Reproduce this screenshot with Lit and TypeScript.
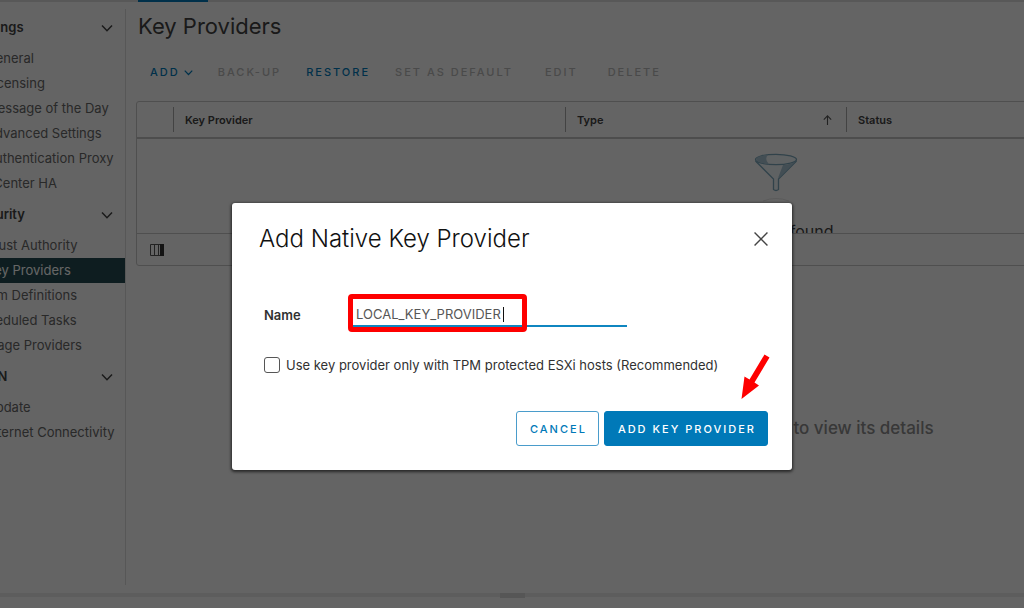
import { LitElement, html, css, svg } from "lit";
import { customElement, property, state } from "lit/decorators.js";
import { classMap } from "lit/directives/class-map.js";

interface NavGroup {
  title: string;
  items: string[];
  roots?: string[];
}

const NAV: NavGroup[] = [
  {
    title: "Settings",
    items: [
      "General",
      "Licensing",
      "Message of the Day",
      "Advanced Settings",
      "Authentication Proxy",
      "vCenter HA",
    ],
  },
  {
    title: "Security",
    items: ["Trust Authority", "Key Providers"],
    roots: ["Alarm Definitions", "Scheduled Tasks", "Storage Providers"],
  },
  { title: "vSAN", items: ["Update", "Internet Connectivity"] },
];

const chevron = (size: number, width: number) => html`<svg
  width=${size}
  height=${size}
  viewBox="0 0 12 12"
  fill="none"
  stroke="currentColor"
  stroke-width=${width}
  aria-hidden="true"
>
  ${svg`<path d="M1 3.5 L6 8.7 L11 3.5" />`}
</svg>`;

@customElement("side-nav")
export class SideNav extends LitElement {
  @property() selected = "";

  static styles = css`
    :host {
      display: block;
      flex: none;
      width: 125px;
      overflow: hidden;
      border-right: 1px solid #dadada;
      color: #666;
      font-size: 13px;
      line-height: 25px;
      white-space: nowrap;
    }
    .track {
      margin-left: -50px;
    }
    .head {
      display: flex;
      align-items: center;
      justify-content: space-between;
      box-sizing: border-box;
      width: 100%;
      height: 37px;
      padding: 0 12px 0 22px;
      border: 0;
      background: none;
      color: #424242;
      font: inherit;
      font-weight: 600;
    }
    .link {
      display: block;
      padding-left: 36px;
      color: inherit;
      text-decoration: none;
    }
    .root {
      padding-left: 22px;
    }
    .active {
      background: #234a50;
      color: #fff;
    }
  `;

  private link(text: string, root: boolean) {
    const active = text === this.selected;
    return html`<a class=${classMap({ link: true, root, active })} href="#">${text}</a>`;
  }

  render() {
    return html`<nav class="track">
      ${NAV.map(
        (g) => html`
          <button class="head" aria-expanded="true">${g.title}${chevron(12, 1.5)}</button>
          ${g.items.map((i) => this.link(i, false))}
          ${(g.roots ?? []).map((i) => this.link(i, true))}
        `
      )}
    </nav>`;
  }
}

@customElement("key-grid")
export class KeyGrid extends LitElement {
  static styles = css`
    :host {
      display: block;
      border: 1px solid #c6c6c6;
      border-radius: 3px;
      color: #424242;
    }
    .table {
      width: 100%;
      table-layout: fixed;
      border-collapse: collapse;
    }
    .pick {
      width: 36px;
    }
    .key {
      width: 392px;
    }
    .type {
      width: 281px;
    }
    .th {
      height: 35px;
      padding: 0;
      border-bottom: 2px solid #c0c0c0;
      text-align: left;
      font-size: 11px;
      font-weight: 600;
    }
    .cell {
      display: flex;
      align-items: center;
      justify-content: space-between;
      height: 25px;
      padding: 0 14px 0 11px;
      border-left: 1px solid #a8a8a8;
    }
    .td {
      padding: 0;
    }
    .empty {
      display: flex;
      flex-direction: column;
      align-items: center;
      box-sizing: border-box;
      height: 94px;
      padding-top: 14px;
      overflow: hidden;
      font-size: 16px;
      line-height: 24px;
    }
    .funnel {
      flex: none;
      margin-bottom: 16px;
    }
    .foot {
      display: flex;
      align-items: center;
      height: 31px;
      padding-left: 13px;
      border-top: 1px solid #c6c6c6;
    }
    .columns {
      display: flex;
      padding: 0;
      border: 0;
      background: none;
      color: #565656;
    }
  `;

  render() {
    return html`
      <table class="table">
        <thead>
          <tr>
            <th class="th pick" aria-label="Select"></th>
            <th class="th key"><div class="cell">Key Provider</div></th>
            <th class="th type">
              <div class="cell">
                Type
                <svg width="9" height="10" viewBox="0 0 9 10" fill="none" stroke="#565656" stroke-width="1.1">
                  <path d="M4.5 10 V1 M0.8 4.6 L4.5 0.9 L8.2 4.6" />
                </svg>
              </div>
            </th>
            <th class="th"><div class="cell">Status</div></th>
          </tr>
        </thead>
        <tbody>
          <tr>
            <td class="td" colspan="4">
              <div class="empty">
                <svg class="funnel" width="44" height="50" viewBox="0 0 44 50" fill="none" stroke="#7ba6ba" stroke-width="1.3">
                  <path d="M1.5 8 L19.5 26 V36.5 Q22 38.5 24.5 36.5 V26 L42.5 8" fill="#eef4f7" />
                  <ellipse cx="22" cy="6.5" rx="20.5" ry="5.2" fill="#eef4f7" />
                  <path d="M29 12 Q38 11 42 8 L26 24 L24 25 Z" fill="#a9c4d2" stroke="none" />
                  <path d="M2 6 Q4 2.6 14 1.8 Q10 6 15 11.4 Q3 10 2 6 Z" fill="#a9c4d2" stroke="none" />
                  <path d="M9 48 Q22 43 35 48" stroke="#e2e2e2" stroke-width="1" />
                </svg>
                <span>No items found</span>
              </div>
            </td>
          </tr>
        </tbody>
      </table>
      <div class="foot">
        <button class="columns" aria-label="Manage columns">
          <svg width="14" height="12" viewBox="0 0 14 12" fill="none" stroke="currentColor">
            <path d="M0.5 0.5 H13.5 V11.5 H0.5 Z M4.5 0.5 V11.5 M8.5 0.5 V11.5" />
            <path d="M10 0 H14 V12 H10 Z" fill="#313131" stroke="none" />
          </svg>
        </button>
      </div>
    `;
  }
}

@customElement("add-provider-dialog")
export class AddProviderDialog extends LitElement {
  @state() private name = "LOCAL_KEY_PROVIDER";

  static styles = css`
    :host {
      display: block;
      box-sizing: border-box;
      width: 560px;
      max-width: 100%;
      padding: 22px 24px 24px 27px;
      border-radius: 3px;
      background: #fff;
      box-shadow: 0 1px 3px 1px rgba(0, 0, 0, 0.6);
      color: #313131;
      font-size: 13px;
    }
    .top {
      display: flex;
      align-items: center;
      justify-content: space-between;
      height: 28px;
    }
    .title {
      margin: 0;
      color: #111;
      font-size: 24px;
      font-weight: 300;
      line-height: 28px;
    }
    .close {
      display: flex;
      padding: 0;
      border: 0;
      background: none;
      color: #444;
    }
    .row {
      display: flex;
      align-items: center;
      margin-top: 49px;
      padding-left: 5px;
    }
    .label {
      width: 88px;
      font-weight: 600;
    }
    .field {
      position: relative;
      width: 275px;
    }
    .input {
      box-sizing: border-box;
      width: 100%;
      height: 25px;
      padding: 1px 4px 0;
      border: 0;
      border-bottom: 2px solid #0f86c0;
      outline: 0;
      background: none;
      color: #565656;
      font: inherit;
    }
    .caret {
      position: absolute;
      top: 5px;
      left: 151px;
      width: 1px;
      height: 15px;
      background: #111;
    }
    .mark {
      position: absolute;
      top: -8px;
      left: -4px;
      box-sizing: border-box;
      width: 179px;
      height: 38px;
      border: 5px solid #fe0000;
      border-radius: 4px;
      pointer-events: none;
    }
    .check {
      display: flex;
      align-items: center;
      gap: 6px;
      margin-top: 28px;
      padding-left: 5px;
      line-height: 20px;
    }
    .box {
      appearance: none;
      box-sizing: border-box;
      width: 16px;
      height: 16px;
      margin: 0;
      border: 1px solid #565656;
      border-radius: 3px;
      background: #fff;
    }
    .actions {
      position: relative;
      display: flex;
      justify-content: flex-end;
      gap: 5px;
      margin-top: 36px;
    }
    .btn {
      height: 35px;
      padding: 0 11px 0 13px;
      border: 1px solid #4a9ccb;
      border-radius: 3px;
      background: #fff;
      color: #0079b8;
      font: inherit;
      font-size: 11px;
      font-weight: 500;
      letter-spacing: 2px;
    }
    .primary {
      border-color: #0079b8;
      background: #0079b8;
      color: #fff;
    }
    .arrow {
      position: absolute;
      top: -57px;
      right: -2px;
      pointer-events: none;
    }
  `;

  render() {
    return html`
      <div class="top">
        <h2 class="title">Add Native Key Provider</h2>
        <button class="close" aria-label="Close">
          <svg width="14" height="14" viewBox="0 0 13 13" fill="none" stroke="currentColor" stroke-width="1.3">
            <path d="M0.5 0.5 L12.5 12.5 M12.5 0.5 L0.5 12.5" />
          </svg>
        </button>
      </div>
      <div class="row">
        <label class="label" for="name">Name</label>
        <div class="field">
          <input
            class="input"
            id="name"
            spellcheck="false"
            .value=${this.name}
            @input=${(e: Event) => (this.name = (e.target as HTMLInputElement).value)}
          />
          <span class="caret"></span>
          <span class="mark"></span>
        </div>
      </div>
      <div class="check">
        <input class="box" id="tpm" type="checkbox" />
        <label for="tpm">Use key provider only with TPM protected ESXi hosts (Recommended)</label>
      </div>
      <div class="actions">
        <button class="btn">CANCEL</button>
        <button class="btn primary">ADD KEY PROVIDER</button>
        <svg class="arrow" width="30" height="46" viewBox="0 0 30 46" fill="#fe0000">
          <path d="M24.5 0.5 L29.5 3.5 L14.5 28.5 L19 31.5 L1.5 45 L4.5 22.5 L9.5 25.5 Z" />
        </svg>
      </div>
    `;
  }
}

@customElement("app-root")
export class AppRoot extends LitElement {
  static styles = css`
    :host {
      position: relative;
      display: flex;
      flex-direction: column;
      height: 100vh;
      overflow: hidden;
      background: #fafafa;
      font-family: Inter, "Open Sans", sans-serif;
    }
    .tabs {
      flex: none;
      height: 1px;
      padding-left: 138px;
      border-bottom: 1px solid #dcdcdc;
      background: #dcdcdc;
    }
    .tab {
      width: 70px;
      height: 2px;
      background: #0079b8;
    }
    .page {
      display: flex;
      flex: 1;
      min-height: 0;
      padding: 7px 0 8px;
    }
    .main {
      flex: 1;
      min-width: 0;
      padding-left: 10px;
      overflow: hidden;
    }
    .wide {
      min-width: 1280px;
    }
    .title {
      margin: 0 0 0 2px;
      padding-top: 3px;
      color: #424242;
      font-size: 22px;
      font-weight: 400;
      line-height: 28px;
    }
    .bar {
      display: flex;
      padding: 20px 0 17px 2px;
    }
    .group {
      display: flex;
      gap: 1px;
    }
    .single {
      display: flex;
      gap: 6px;
      padding-left: 8px;
    }
    .btn {
      display: flex;
      align-items: center;
      gap: 4px;
      height: 24px;
      padding: 0 12px;
      border: 0;
      background: none;
      color: #0079b8;
      font: inherit;
      font-size: 11px;
      font-weight: 500;
      letter-spacing: 2px;
      white-space: nowrap;
    }
    .btn:disabled {
      color: #b8b8b8;
    }
    .hint {
      margin: 152px 0 0;
      color: #8c8c8c;
      font-size: 17px;
      font-weight: 500;
      line-height: 20px;
      text-align: center;
    }
    .split {
      display: flex;
      justify-content: center;
      flex: none;
      height: 4px;
      margin-bottom: 11px;
      background: #e8e8e8;
    }
    .grip {
      width: 25px;
      height: 5px;
      background: #d8d8d8;
    }
    .backdrop {
      position: absolute;
      inset: 0;
      display: flex;
      align-items: flex-start;
      justify-content: center;
      padding-top: 203px;
      background: rgba(0, 0, 0, 0.6);
    }
  `;

  render() {
    return html`
      <div class="tabs"><div class="tab"></div></div>
      <div class="page">
        <side-nav selected="Key Providers"></side-nav>
        <main class="main">
          <div class="wide">
            <h1 class="title">Key Providers</h1>
            <div class="bar">
              <div class="group">
                <button class="btn">ADD ${chevron(9, 1.6)}</button>
                <button class="btn" disabled>BACK-UP</button>
                <button class="btn">RESTORE</button>
                <button class="btn" disabled>SET AS DEFAULT</button>
              </div>
              <div class="single">
                <button class="btn" disabled>EDIT</button>
                <button class="btn" disabled>DELETE</button>
              </div>
            </div>
            <key-grid></key-grid>
            <p class="hint">Select a key provider to view its details</p>
          </div>
        </main>
      </div>
      <div class="split"><div class="grip"></div></div>
      <div class="backdrop"><add-provider-dialog role="dialog" aria-label="Add Native Key Provider"></add-provider-dialog></div>
    `;
  }
}
